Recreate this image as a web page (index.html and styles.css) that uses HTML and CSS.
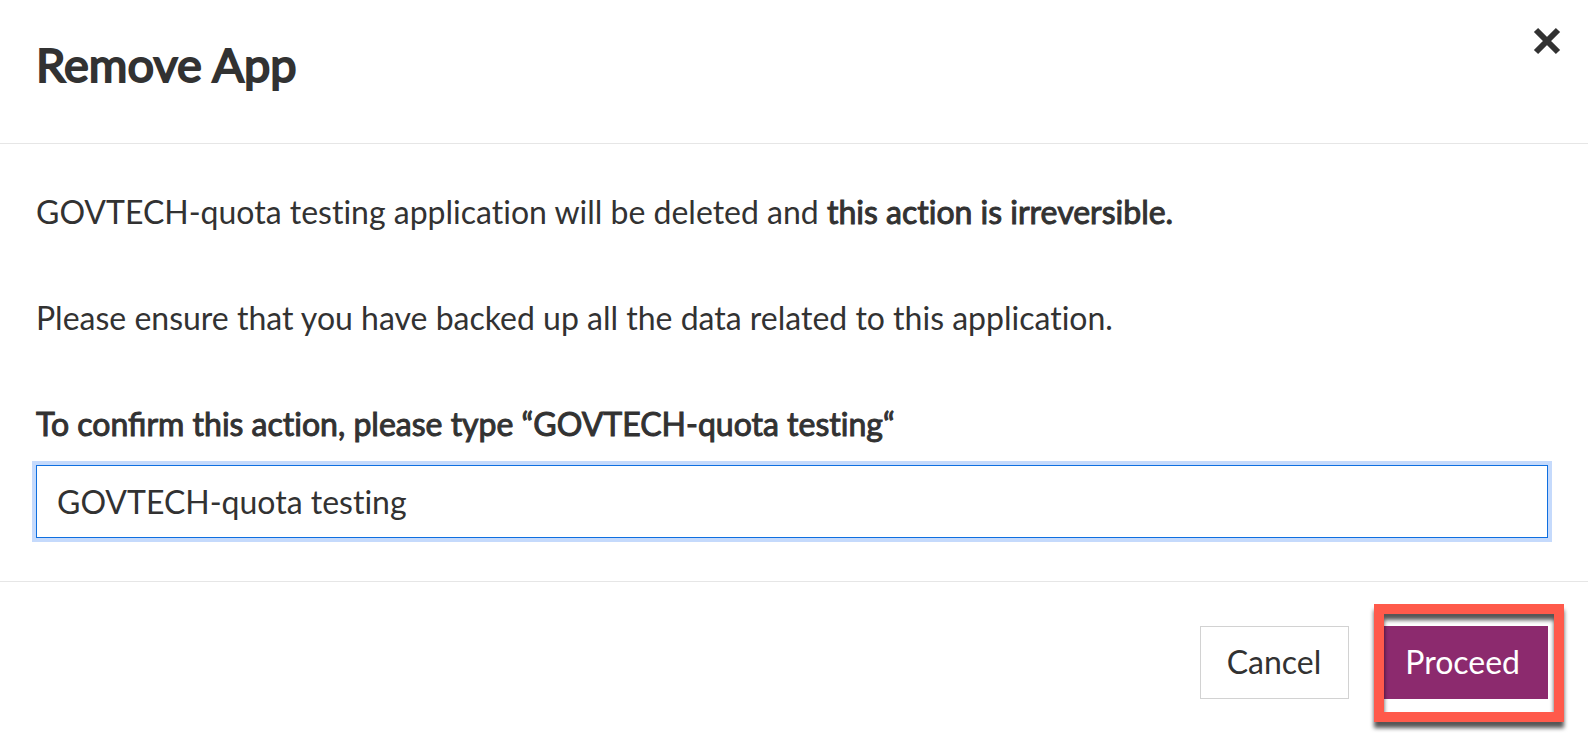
FILE: index.html
```html
<!DOCTYPE html>
<html lang="en">
<head>
<meta charset="utf-8">
<title>Remove App</title>
<link rel="stylesheet" href="styles.css">
</head>
<body>
<form class="dialog">
  <header class="dialog-header">
    <h1 class="title">Remove App</h1>
    <button class="close" type="button" aria-label="Close">
      <svg class="close-icon" viewBox="0 0 28 28"><path d="M3 3L25 25M25 3L3 25"/></svg>
    </button>
  </header>
  <div class="dialog-body">
    <p class="text">GOVTECH-quota testing application will be deleted and <strong class="strong">this action is irreversible.</strong></p>
    <p class="text">Please ensure that you have backed up all the data related to this application.</p>
    <label class="label strong" for="confirm">To <span class="ligatures">confirm</span> this action, please type “GOVTECH-quota testing“</label>
    <input class="field" id="confirm" type="text" value="GOVTECH-quota testing">
  </div>
  <footer class="dialog-footer">
    <button class="button cancel" type="button">Cancel</button>
    <div class="highlighted">
      <button class="button proceed" type="submit">Proceed</button>
      <span class="highlight"></span>
    </div>
  </footer>
</form>
</body>
</html>
```
FILE: styles.css
```css
* { box-sizing: border-box; }
body {
  margin: 0;
  background: #fff;
  color: #323232;
  font: 32px/48px Lato, sans-serif;
  font-variant-ligatures: none;
}
.dialog-header {
  display: flex;
  justify-content: space-between;
  align-items: flex-start;
  padding: 27px 27px 42px 36px;
  border-bottom: 1px solid #e6e6e6;
}
.title {
  margin: 0;
  font-size: 47px;
  line-height: 74px;
  font-weight: 400;
  -webkit-text-stroke: 2px currentColor;
}
.close {
  display: flex;
  padding: 0;
  border: 0;
  background: none;
}
.close-icon {
  width: 28px;
  height: 28px;
  fill: none;
  stroke: #323232;
  stroke-width: 6;
}
.dialog-body {
  padding: 44px 40px 43px 36px;
  border-bottom: 1px solid #e6e6e6;
}
.text { margin: 0 0 58px; }
.strong {
  font-weight: 400;
  -webkit-text-stroke: 1px currentColor;
}
.label { display: block; }
.ligatures { font-variant-ligatures: normal; }
.field {
  display: block;
  width: 100%;
  height: 73px;
  margin-top: 17px;
  padding: 0 20px;
  border: 1px solid #0f6fe0;
  border-radius: 0;
  outline: 4px solid #c5dafc;
  color: inherit;
  font: inherit;
  font-variant-ligatures: none;
}
.dialog-footer {
  display: flex;
  justify-content: flex-end;
  gap: 35px;
  padding: 44px 40px;
}
.button {
  display: block;
  height: 73px;
  padding: 0 27px 2px 26px;
  border: 1px solid #d2d2d2;
  background: #fff;
  color: inherit;
  font: inherit;
}
.proceed {
  padding: 0 27px 2px 20px;
  border-color: #8c2a6e;
  background: #8c2a6e;
  color: #fff;
}
.highlighted { position: relative; }
.highlight {
  position: absolute;
  inset: -22px -16px -23px -10px;
  border: 10px solid #ff5a4b;
  filter: drop-shadow(0 6px 2px #000a);
  pointer-events: none;
}
```
